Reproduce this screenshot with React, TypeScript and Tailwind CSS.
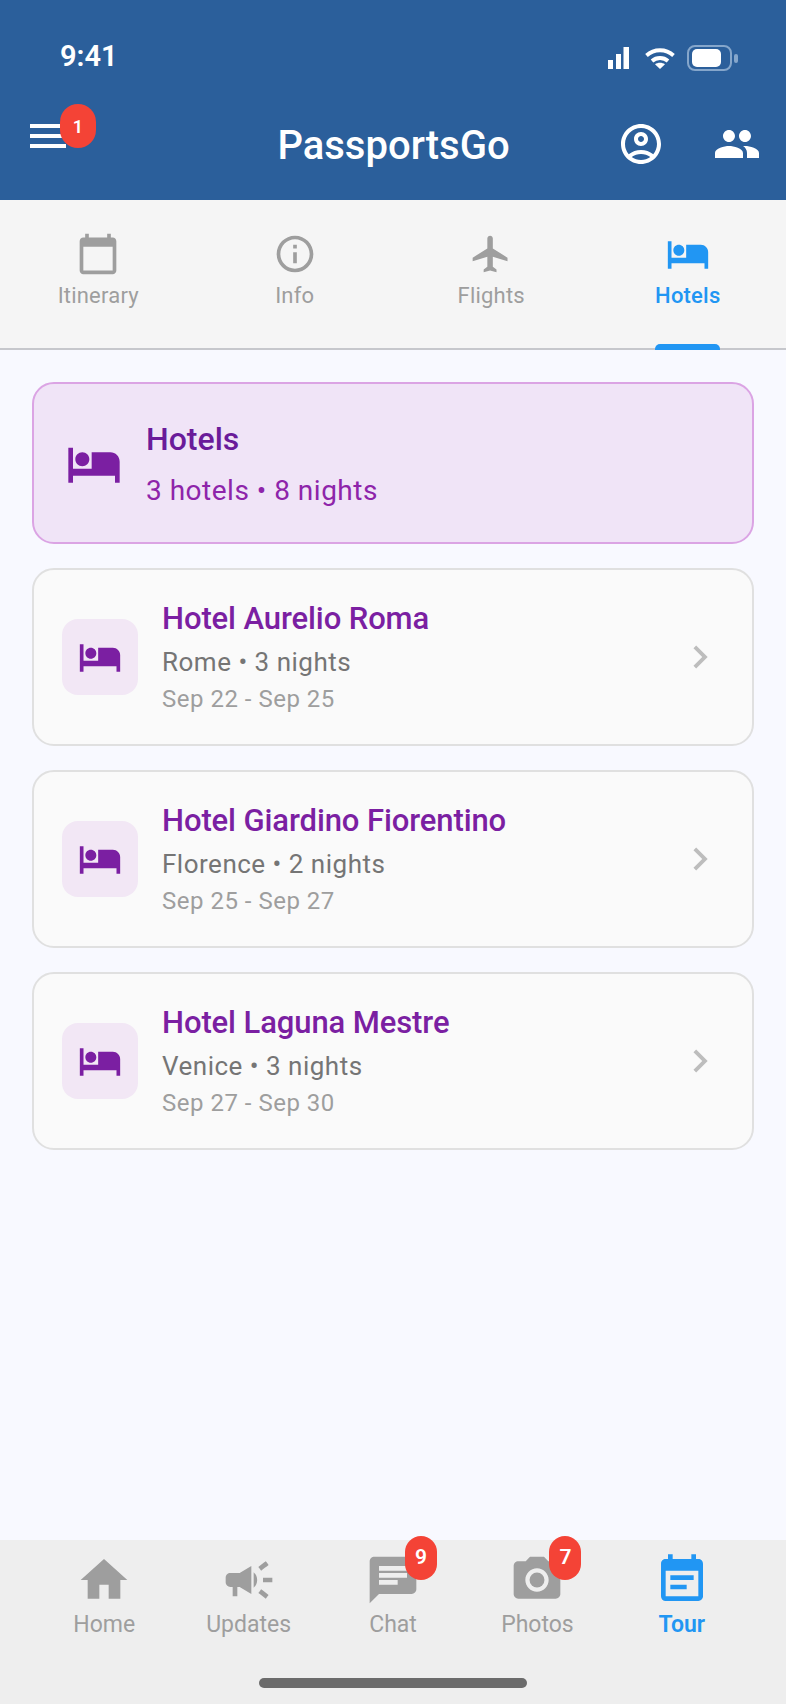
import React from "react"
import {
  MdCalendarToday,
  MdCameraAlt,
  MdCampaign,
  MdChat,
  MdChevronRight,
  MdEventNote,
  MdFlight,
  MdHome,
  MdHotel,
  MdInfoOutline,
  MdOutlineAccountCircle,
  MdPeople,
} from "react-icons/md"

const hotels = [
  { name: "Hotel Aurelio Roma", place: "Rome • 3 nights", dates: "Sep 22 - Sep 25" },
  { name: "Hotel Giardino Fiorentino", place: "Florence • 2 nights", dates: "Sep 25 - Sep 27" },
  { name: "Hotel Laguna Mestre", place: "Venice • 3 nights", dates: "Sep 27 - Sep 30" },
]

const tabs = [
  { label: "Itinerary", Icon: MdCalendarToday },
  { label: "Info", Icon: MdInfoOutline },
  { label: "Flights", Icon: MdFlight },
  { label: "Hotels", Icon: MdHotel, active: true },
]

const navItems = [
  { label: "Home", Icon: MdHome },
  { label: "Updates", Icon: MdCampaign },
  { label: "Chat", Icon: MdChat, badge: "9" },
  { label: "Photos", Icon: MdCameraAlt, badge: "7" },
  { label: "Tour", Icon: MdEventNote, active: true },
]

const StatusIcons = () => (
  <div className="flex items-center">
    <svg width="21" height="22" viewBox="0 0 21 22" fill="white">
      <rect x="0" y="13" width="5" height="9" />
      <rect x="8" y="7" width="5" height="15" />
      <rect x="15.500" y="0" width="5.500" height="22" />
    </svg>
    <svg className="ml-[16px]" width="30" height="22" viewBox="0 0 30 22" fill="none" stroke="white" strokeWidth="3.8">
      <path d="M1.500 8.500c7.500-7 19.500-7 27 0" />
      <path d="M7 14c4.500-4 11.500-4 16 0" />
      <path d="M15 22l-5-4.800c2.800-2 7.200-2 10 0z" fill="white" stroke="none" />
    </svg>
    <div className="ml-[12px] flex items-center gap-[2px]">
      <div className="flex h-[26px] w-[45px] items-center rounded-[8px] border-2 border-[#85a6cb] px-[3px] py-[2px]">
        <div className="h-full w-[29px] rounded-[5px] bg-white" />
      </div>
      <div className="h-[9px] w-[4px] rounded-full bg-[#85a6cb]" />
    </div>
  </div>
)

const App = () => {
  return (
    <div className="flex h-[1704px] w-[786px] flex-col bg-[#f8f9ff] font-['Roboto',sans-serif]">
      <header className="h-[200px] bg-[#2b5f9b] text-white">
        <div className="flex h-[94px] items-start justify-between pl-[60px] pr-[48px] pt-[39px]">
          <span className="text-[29px] leading-[34px] font-semibold">9:41</span>
          <div className="pt-[6px]">
            <StatusIcons />
          </div>
        </div>
        <div className="grid h-[100px] grid-cols-[1fr_auto_1fr] items-center pl-[30px] pr-[25px]">
          <div className="relative -mt-[16px] flex w-[36px] flex-col gap-[6px]">
            <div className="h-[4px] bg-white" />
            <div className="h-[4px] bg-white" />
            <div className="h-[4px] bg-white" />
            <span className="absolute -top-[20px] left-[30px] flex h-[44px] w-[36px] items-center justify-center rounded-full bg-[#f44336] text-[18px] font-semibold">
              1
            </span>
          </div>
          <h1 className="mt-[4px] translate-x-[-2px] text-[40px] leading-[46px] font-medium">PassportsGo</h1>
          <div className="flex items-center justify-end gap-[48px]">
            <MdOutlineAccountCircle size={48} />
            <MdPeople size={48} />
          </div>
        </div>
      </header>

      <nav className="relative flex h-[150px] border-b-2 border-[#c6c7cc] bg-[#f5f5f5]">
        {tabs.map(({ label, Icon, active }) => (
          <div
            key={label}
            className={
              "relative flex flex-1 flex-col items-center pt-[32px] " +
              (active ? "font-medium text-[#2196f3]" : "text-[#9e9e9e]")
            }
          >
            <Icon size={44} />
            <span className="mt-[6px] text-[22px] leading-[28px] tracking-[0.2px]">{label}</span>
            {active && (
              <div className="absolute -bottom-[2px] h-[6px] w-[65px] rounded-t-[5px] bg-[#2196f3]" />
            )}
          </div>
        ))}
      </nav>

      <main className="flex flex-1 flex-col gap-[24px] px-[32px] pt-[32px]">
        <div className="flex h-[162px] items-center gap-[24px] rounded-[22px] border-2 border-[#dba4e4] bg-[#f0e4f7] pl-[32px]">
          <MdHotel size={56} className="mt-[2px] shrink-0 text-[#7b1fa2]" />
          <div>
            <h2 className="text-[32px] leading-[40px] font-medium text-[#6a1b9a]">Hotels</h2>
            <p className="mt-[15px] text-[28px] leading-[34px] tracking-[0.5px] text-[#8e24aa]">
              3 hotels • 8 nights
            </p>
          </div>
        </div>

        {hotels.map((hotel) => (
          <div
            key={hotel.name}
            className="flex h-[178px] items-center rounded-[22px] border-2 border-[#e0e0e0] bg-[#fafafa] pl-[28px] pr-[29px]"
          >
            <div className="flex h-[76px] w-[76px] shrink-0 items-center justify-center rounded-[16px] bg-[#f2e7f5]">
              <MdHotel size={44} className="text-[#7b1fa2]" />
            </div>
            <div className="ml-[24px] flex-1">
              <h3 className="text-[31px] leading-[38px] tracking-[-0.1px] font-medium text-[#7b1fa2]">{hotel.name}</h3>
              <p className="mt-[8px] text-[26px] leading-[32px] tracking-[0.5px] text-[#757575]">
                {hotel.place}
              </p>
              <p className="mt-[6px] text-[24px] leading-[30px] tracking-[0.5px] text-[#9e9e9e]">
                {hotel.dates}
              </p>
            </div>
            <MdChevronRight size={46} className="text-[#bdbdbd]" />
          </div>
        ))}
      </main>

      <footer className="flex h-[164px] flex-col bg-[#eeeeee]">
        <div className="flex px-[32px] pt-[12px]">
          {navItems.map(({ label, Icon, badge, active }) => (
            <div
              key={label}
              className={
                "flex flex-1 flex-col items-center " +
                (active ? "font-semibold text-[#2196f3]" : "text-[#9e9e9e]")
              }
            >
              <div className="relative">
                <Icon size={56} />
                {badge && (
                  <span className="absolute -top-[16px] left-[40px] flex h-[44px] w-[32px] items-center justify-center rounded-full bg-[#f44336] text-[21px] font-semibold text-white">
                    {badge}
                  </span>
                )}
              </div>
              <span className="mt-[3px] text-[23px] leading-[28px]">{label}</span>
            </div>
          ))}
        </div>
        <div className="mt-auto mb-[16px] h-[10px] w-[268px] self-center rounded-full bg-[#6b6b6b]" />
      </footer>
    </div>
  )
}

export default App
